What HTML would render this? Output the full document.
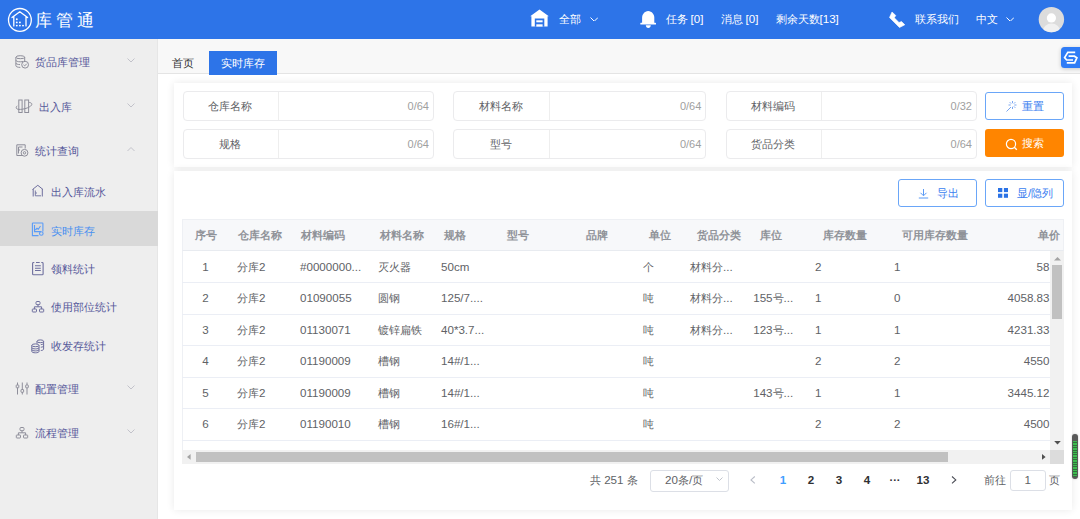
<!DOCTYPE html><html><head><meta charset="utf-8"><style>
*{box-sizing:border-box;margin:0;padding:0}
html,body{width:1080px;height:519px;overflow:hidden;background:#fff;font-family:"Liberation Sans",sans-serif;font-size:11px;color:#606266}
.a{position:absolute;white-space:nowrap}
.b{position:absolute}
</style></head><body>
<div class="b" style="left:0;top:0;width:1080px;height:39px;background:#2d74e8"></div>
<svg class="b" style="left:0;top:0" width="40" height="40" viewBox="0 0 40 40">
<circle cx="19.9" cy="19.9" r="11.4" fill="none" stroke="#fff" stroke-width="1.3"/>
<path d="M12 17.6 L19.8 11.8 L27.6 17.6 M13.8 16.6 V25.9 M26 16.6 V25.9" fill="none" stroke="#fff" stroke-width="1.3" stroke-linecap="round" stroke-linejoin="round"/>
<g fill="#fff"><circle cx="16.8" cy="19.2" r="0.95"/><circle cx="16.8" cy="22.4" r="0.95"/><circle cx="19.9" cy="22.4" r="0.95"/><circle cx="16.8" cy="25.6" r="0.95"/><circle cx="19.9" cy="25.6" r="0.95"/><circle cx="23" cy="25.6" r="0.95"/></g>
</svg>
<div class="a" style="left:35px;top:9px;font-size:17px;line-height:24px;letter-spacing:3.8px;color:#fff">库管通</div>
<svg class="b" style="left:0;top:0" width="1080" height="39" viewBox="0 0 1080 39">
<path d="M539.5 9.6 L548.8 16.2 L547.6 16.2 V26.6 H531.4 V16.2 L530.2 16.2 Z" fill="#fff"/>
<rect x="534.8" y="18.5" width="9.5" height="8.2" fill="#2d74e8"/>
<rect x="536.3" y="20.3" width="6.3" height="2" fill="#fff"/><rect x="536.3" y="24.3" width="6.3" height="2.3" fill="#fff"/>
<path d="M648.2 11 C644.5 11.4 642.1 14 642.1 18 V23 H654.3 V18 C654.3 14 651.9 11.4 648.2 11 Z" fill="#fff"/>
<rect x="640.3" y="22.8" width="15.7" height="1.8" rx="0.6" fill="#fff"/>
<path d="M645.8 25.3 H650.8 C650.8 26.9 649.7 28 648.3 28 C646.9 28 645.8 26.9 645.8 25.3 Z" fill="#fff"/>
<path d="M892 12 L895.8 15.5 L894.3 17.8 L899 22.5 L901.5 21.5 L904.8 24.8 L899.5 27.5 L889.5 17.5 Z" fill="#fff" stroke="#fff" stroke-width="0.6" stroke-linejoin="round"/>
<circle cx="1051.4" cy="19.6" r="12.7" fill="#dcdcdc"/>
<clipPath id="av"><circle cx="1051.4" cy="19.6" r="12.7"/></clipPath>
<ellipse cx="1051.5" cy="31" rx="8.6" ry="7.4" fill="#f0f0f0" clip-path="url(#av)"/>
<circle cx="1051.4" cy="17.9" r="4.6" fill="#fff"/>
</svg>
<div class="a" style="top:11.80px;line-height:14px;left:559px;color:#fff;">全部</div>
<svg class="b" style="left:589.5px;top:16.5px" width="8.5" height="4.75"><path d="M0.5 0.5 L4.25 4.25 L8.0 0.5" fill="none" stroke="#fff" stroke-width="1"/></svg>
<div class="a" style="top:11.80px;line-height:14px;left:665.5px;color:#fff;">任务 <span style="font-size:11.6px">[0]</span></div>
<div class="a" style="top:11.80px;line-height:14px;left:720.5px;color:#fff;">消息 <span style="font-size:11.6px">[0]</span></div>
<div class="a" style="top:11.80px;line-height:14px;left:775.5px;color:#fff;">剩余天数<span style="font-size:11.6px">[13]</span></div>
<div class="a" style="top:11.80px;line-height:14px;left:914.5px;color:#fff;">联系我们</div>
<div class="a" style="top:11.80px;line-height:14px;left:975.5px;color:#fff;">中文</div>
<svg class="b" style="left:1005.5px;top:16.5px" width="8.5" height="4.75"><path d="M0.5 0.5 L4.25 4.25 L8.0 0.5" fill="none" stroke="#fff" stroke-width="1"/></svg>
<div class="b" style="left:0;top:39px;width:158px;height:480px;background:#eeeeee"></div>
<div class="b" style="left:157px;top:39px;width:1px;height:480px;background:#e6e6e6"></div>
<div class="b" style="left:0;top:211px;width:158px;height:35px;background:#d9d9d9"></div>
<svg class="b" style="left:14px;top:54px" width="16" height="16" viewBox="0 0 16 16"><g fill="none" stroke="#8e8e9a" stroke-width="1"><ellipse cx="6.3" cy="3.2" rx="4.4" ry="1.5"/><path d="M1.9 3.2 V11.8 C1.9 12.7 3.8 13.4 6.3 13.4 M10.7 3.2 V7.5 M1.9 6.2 C1.9 7.1 3.8 7.8 6.3 7.8 C7.5 7.8 8.5 7.6 9.2 7.4 M1.9 9 C1.9 9.9 3.8 10.6 6 10.6"/><circle cx="11.1" cy="10.7" r="3.4" fill="#eeeeee"/><path d="M9.5 10.8 L10.7 11.9 L12.7 9.8"/></g></svg>
<div class="a" style="top:55.30px;line-height:14px;left:35.1px;color:#56589a;">货品库管理</div>
<svg class="b" style="left:126.5px;top:58.199999999999996px" width="8" height="4.5"><path d="M0.5 0.5 L4.0 4.0 L7.5 0.5" fill="none" stroke="#c2c2ca" stroke-width="1"/></svg>
<svg class="b" style="left:15px;top:99px" width="18" height="15" viewBox="0 0 18 15"><g fill="none" stroke="#8e8e9a" stroke-width="1"><rect x="3.8" y="1" width="3.3" height="12.5"/><rect x="9.8" y="1" width="3.8" height="12.5"/><path d="M2.2 6.8 C0.3 8.8 1 10.6 5.5 10.4 C10 10.2 16.5 7.8 16.8 5.4 C17 4.3 15.8 3.6 14.2 3.4"/></g></svg>
<div class="a" style="top:100.00px;line-height:14px;left:38.5px;color:#56589a;">出入库</div>
<svg class="b" style="left:126.5px;top:102.9px" width="8" height="4.5"><path d="M0.5 0.5 L4.0 4.0 L7.5 0.5" fill="none" stroke="#c2c2ca" stroke-width="1"/></svg>
<svg class="b" style="left:16px;top:144px" width="14" height="14" viewBox="0 0 14 14"><g fill="none" stroke="#8e8e9a" stroke-width="1"><path d="M6.5 11.5 H0.8 V0.8 H9.2 V4.5"/><path d="M2.5 3 H6.5 M2.5 3 V9.5 M2.5 6 H4" /><circle cx="8.5" cy="8.8" r="3.4" fill="#eeeeee"/><circle cx="8.5" cy="8.8" r="1.2"/></g></svg>
<div class="a" style="top:143.80px;line-height:14px;left:34.7px;color:#56589a;">统计查询</div>
<svg class="b" style="left:126.5px;top:146.70000000000002px" width="8" height="4.5"><path d="M0.5 4.0 L4.0 0.5 L7.5 4.0" fill="none" stroke="#c2c2ca" stroke-width="1"/></svg>
<svg class="b" style="left:31px;top:184px" width="14" height="14" viewBox="0 0 14 14"><g fill="none" stroke="#6e6f9e" stroke-width="1"><path d="M1.5 5.5 L6.8 1.3 L12 5.5 M2.2 5 V12.5 M11.3 5 V12.5"/><path d="M4.3 6.5 V11.8 H10 M4.3 9 H6" stroke-width="0.9"/></g></svg>
<div class="a" style="top:185.00px;line-height:14px;left:50.9px;color:#56589a;">出入库流水</div>
<svg class="b" style="left:31px;top:222px" width="14" height="15" viewBox="0 0 14 15"><g fill="none" stroke="#5a9cf8" stroke-width="1.1"><path d="M7.5 13.6 H1.4 V1.6 Q1.4 1 2 1 H11.3 Q11.9 1 11.9 1.6 V9.5"/><path d="M3.5 3 V9.6 H10"/><path d="M4.3 8 L6 6.3 L7.3 7.3 L9.5 4"/><circle cx="10.3" cy="11.5" r="1.8"/></g></svg>
<div class="a" style="top:223.60px;line-height:14px;left:50.9px;color:#4a90f0;">实时库存</div>
<svg class="b" style="left:31px;top:261px" width="14" height="15" viewBox="0 0 14 15"><g fill="none" stroke="#6e6f9e" stroke-width="1.1"><path d="M3.3 1.5 H2.5 Q1.6 1.5 1.6 2.4 V12.9 Q1.6 13.8 2.5 13.8 H11.2 Q12.1 13.8 12.1 12.9 V2.4 Q12.1 1.5 11.2 1.5 H10.3 M5 1.5 H8.7"/><path d="M4 4.8 H9.8 M4 7.3 H9.8 M4 9.5 H9.8"/></g></svg>
<div class="a" style="top:261.80px;line-height:14px;left:50.9px;color:#56589a;">领料统计</div>
<svg class="b" style="left:31px;top:300px" width="14" height="14" viewBox="0 0 14 14"><g fill="none" stroke="#6e6f9e" stroke-width="1"><rect x="5" y="1.5" width="4" height="3.2" rx="1"/><path d="M7 4.7 V6.8 M3.4 9 V6.8 H10.6 V9"/><rect x="1.3" y="9" width="4.2" height="3" rx="0.6"/><rect x="8.5" y="9" width="4.2" height="3" rx="0.6"/></g></svg>
<div class="a" style="top:300.40px;line-height:14px;left:50.9px;color:#56589a;">使用部位统计</div>
<svg class="b" style="left:30px;top:338px" width="16" height="16" viewBox="0 0 16 16"><g fill="none" stroke="#6e6f9e" stroke-width="1"><ellipse cx="10.3" cy="3.3" rx="3.3" ry="1.4"/><path d="M7 3.3 V5.6 M13.6 3.3 V11.2 C13.6 11.9 12.4 12.4 10.8 12.5 M10.8 6.6 C12.4 6.5 13.6 6 13.6 5.3 M10.8 9.2 C12.4 9.1 13.6 8.6 13.6 7.9"/><ellipse cx="5.4" cy="7.3" rx="3.6" ry="1.4" fill="#eeeeee"/><path d="M1.8 7.3 V13.5 C1.8 14.3 3.4 14.8 5.4 14.8 C7.4 14.8 9 14.3 9 13.5 V7.3 M1.8 9.6 C1.8 10.4 3.4 10.9 5.4 10.9 C7.4 10.9 9 10.4 9 9.6 M1.8 11.6 C1.8 12.4 3.4 12.9 5.4 12.9 C7.4 12.9 9 12.4 9 11.6"/></g></svg>
<div class="a" style="top:339.30px;line-height:14px;left:50.9px;color:#56589a;">收发存统计</div>
<svg class="b" style="left:15px;top:381px" width="15" height="15" viewBox="0 0 15 15"><g fill="none" stroke="#8e8e9a" stroke-width="1"><path d="M2.5 1.5 V4 M2.5 6.8 V13.5 M7.3 1.5 V8.5 M7.3 11.2 V13.5 M12 1.5 V4 M12 6.8 V13.5"/><rect x="1.2" y="4" width="2.6" height="2.8" rx="0.5"/><rect x="6" y="8.5" width="2.6" height="2.8" rx="0.5"/><rect x="10.7" y="4" width="2.6" height="2.8" rx="0.5"/></g></svg>
<div class="a" style="top:382.10px;line-height:14px;left:34.6px;color:#56589a;">配置管理</div>
<svg class="b" style="left:126.5px;top:385.0px" width="8" height="4.5"><path d="M0.5 0.5 L4.0 4.0 L7.5 0.5" fill="none" stroke="#c2c2ca" stroke-width="1"/></svg>
<svg class="b" style="left:15px;top:426px" width="14" height="14" viewBox="0 0 14 14"><g fill="none" stroke="#8e8e9a" stroke-width="1"><rect x="5" y="1.5" width="4" height="3.2" rx="1"/><path d="M7 4.7 V6.8 M3.4 9 V6.8 H10.6 V9"/><rect x="1.3" y="9" width="4.2" height="3" rx="0.6"/><rect x="8.5" y="9" width="4.2" height="3" rx="0.6"/></g></svg>
<div class="a" style="top:426.00px;line-height:14px;left:34.6px;color:#56589a;">流程管理</div>
<svg class="b" style="left:126.5px;top:428.9px" width="8" height="4.5"><path d="M0.5 0.5 L4.0 4.0 L7.5 0.5" fill="none" stroke="#c2c2ca" stroke-width="1"/></svg>
<div class="b" style="left:158px;top:39px;width:922px;height:35px;background:#f8f8f8;border-bottom:1px solid #e4e4e4"></div>
<div class="a" style="top:56.00px;line-height:14px;left:172.2px;color:#303133;">首页</div>
<div class="b" style="left:209px;top:51px;width:68px;height:23.5px;background:#2d74e8"></div>
<div class="a" style="top:56.00px;line-height:14px;left:220.8px;color:#fff;">实时库存</div>
<div class="b" style="left:1061px;top:47.2px;width:24px;height:20.5px;border-radius:3.5px;background:#2f7cf6;box-shadow:0 1px 4px rgba(0,0,0,0.2)"></div>
<svg class="b" style="left:1040px;top:40px" width="40" height="40" viewBox="1040 40 40 40"><g fill="none" stroke="#fff" stroke-width="1.7" stroke-linejoin="miter"><path d="M1075.2 52.3 H1067.8 L1064.6 57.6 L1066.7 60 H1073"/><path d="M1068.6 56.2 H1074.4 L1076.9 57.8 L1074.6 62.9 H1066.8"/></g></svg>
<div class="b" style="left:173.5px;top:82.5px;width:898.5px;height:84px;background:#fff;box-shadow:0 0 8px rgba(0,0,0,0.09)"></div>
<div class="b" style="left:182.5px;top:91px;width:251.5px;height:29.5px;border:1px solid #ebebed;border-radius:4px;background:#fff"></div>
<div class="b" style="left:277.6px;top:92px;width:1px;height:27.5px;background:#eeeeee"></div>
<div class="a" style="top:98.50px;line-height:14px;left:130.05px;width:200px;text-align:center;color:#606266;">仓库名称</div>
<div class="a" style="top:98.50px;line-height:14px;right:651px;color:#a0a0a0;">0/64</div>
<div class="b" style="left:182.5px;top:129.4px;width:251.5px;height:29.5px;border:1px solid #ebebed;border-radius:4px;background:#fff"></div>
<div class="b" style="left:277.6px;top:130.4px;width:1px;height:27.5px;background:#eeeeee"></div>
<div class="a" style="top:136.90px;line-height:14px;left:130.05px;width:200px;text-align:center;color:#606266;">规格</div>
<div class="a" style="top:136.90px;line-height:14px;right:651px;color:#a0a0a0;">0/64</div>
<div class="b" style="left:453px;top:91px;width:253.29999999999995px;height:29.5px;border:1px solid #ebebed;border-radius:4px;background:#fff"></div>
<div class="b" style="left:549px;top:92px;width:1px;height:27.5px;background:#eeeeee"></div>
<div class="a" style="top:98.50px;line-height:14px;left:401.0px;width:200px;text-align:center;color:#606266;">材料名称</div>
<div class="a" style="top:98.50px;line-height:14px;right:378.70000000000005px;color:#a0a0a0;">0/64</div>
<div class="b" style="left:453px;top:129.4px;width:253.29999999999995px;height:29.5px;border:1px solid #ebebed;border-radius:4px;background:#fff"></div>
<div class="b" style="left:549px;top:130.4px;width:1px;height:27.5px;background:#eeeeee"></div>
<div class="a" style="top:136.90px;line-height:14px;left:401.0px;width:200px;text-align:center;color:#606266;">型号</div>
<div class="a" style="top:136.90px;line-height:14px;right:378.70000000000005px;color:#a0a0a0;">0/64</div>
<div class="b" style="left:725.5px;top:91px;width:251.5px;height:29.5px;border:1px solid #ebebed;border-radius:4px;background:#fff"></div>
<div class="b" style="left:821px;top:92px;width:1px;height:27.5px;background:#eeeeee"></div>
<div class="a" style="top:98.50px;line-height:14px;left:673.25px;width:200px;text-align:center;color:#606266;">材料编码</div>
<div class="a" style="top:98.50px;line-height:14px;right:108px;color:#a0a0a0;">0/32</div>
<div class="b" style="left:725.5px;top:129.4px;width:251.5px;height:29.5px;border:1px solid #ebebed;border-radius:4px;background:#fff"></div>
<div class="b" style="left:821px;top:130.4px;width:1px;height:27.5px;background:#eeeeee"></div>
<div class="a" style="top:136.90px;line-height:14px;left:673.25px;width:200px;text-align:center;color:#606266;">货品分类</div>
<div class="a" style="top:136.90px;line-height:14px;right:108px;color:#a0a0a0;">0/64</div>
<div class="b" style="left:985.3px;top:91.5px;width:78.5px;height:28.2px;border:1px solid #6aa6f8;border-radius:3px;background:#fff"></div>
<div class="a" style="top:98.60px;line-height:14px;left:1021.9px;color:#3a7ef0;">重置</div>
<svg class="b" style="left:1005px;top:99.5px" width="13" height="13" viewBox="0 0 13 13"><g stroke="#7aa6f0" stroke-width="1" fill="none"><path d="M1.5 11.5 L6 7"/><path d="M7.5 1 V3.2 M7.5 6.8 V9 M3.5 5 H5.7 M9.3 5 H11.5 M4.7 2.2 L6.1 3.6 M8.9 6.4 L10.3 7.8 M10.3 2.2 L8.9 3.6"/></g></svg>
<div class="b" style="left:985.3px;top:129px;width:78.5px;height:28px;border-radius:3px;background:#ff8500"></div>
<svg class="b" style="left:1005px;top:137.5px" width="13" height="13" viewBox="0 0 13 13"><circle cx="6" cy="6" r="4.6" fill="none" stroke="#fff" stroke-width="1.2"/><path d="M9.3 9.3 L11.8 11.8" stroke="#fff" stroke-width="1.3"/></svg>
<div class="a" style="top:136.00px;line-height:14px;left:1021.9px;color:#fff;">搜索</div>
<div class="b" style="left:173.5px;top:170.5px;width:898.5px;height:339.5px;background:#fff;box-shadow:0 0 8px rgba(0,0,0,0.09)"></div>
<div class="b" style="left:898.2px;top:178.5px;width:78.6px;height:28px;border:1px solid #6aa6f8;border-radius:3px;background:#fff"></div>
<svg class="b" style="left:918px;top:188px" width="11" height="11" viewBox="0 0 11 11"><path d="M5.5 1 V7.5 M2.5 4.8 L5.5 7.8 L8.5 4.8 M0.8 10 H10.2" fill="none" stroke="#5b9af5" stroke-width="1"/></svg>
<div class="a" style="top:185.50px;line-height:14px;left:936.8px;color:#3a7ef0;">导出</div>
<div class="b" style="left:985.4px;top:178.5px;width:78.6px;height:28px;border:1px solid #6aa6f8;border-radius:3px;background:#fff"></div>
<svg class="b" style="left:997.9px;top:187.9px" width="10.2" height="9.8" viewBox="0 0 10.2 9.8"><g fill="#2a72e6"><rect x="0" y="0" width="4.3" height="4.1"/><rect x="5.9" y="0" width="4.3" height="4.1"/><rect x="0" y="5.7" width="4.3" height="4.1"/><rect x="5.9" y="5.7" width="4.3" height="4.1"/></g></svg>
<div class="a" style="top:185.50px;line-height:14px;left:1016.9px;color:#3a7ef0;">显<span style="font-size:11.6px">/</span>隐列</div>
<div class="b" style="left:182px;top:219px;width:881.5px;height:32px;background:#f7f8fa;border:1px solid #eef0f4;border-bottom:1px solid #e8ebf0"></div>
<div class="a" style="top:228.30px;line-height:14px;left:106px;width:200px;text-align:center;color:#909399;font-weight:bold;">序号</div>
<div class="a" style="top:228.30px;line-height:14px;left:238px;color:#909399;font-weight:bold;">仓库名称</div>
<div class="a" style="top:228.30px;line-height:14px;left:301px;color:#909399;font-weight:bold;">材料编码</div>
<div class="a" style="top:228.30px;line-height:14px;left:380px;color:#909399;font-weight:bold;">材料名称</div>
<div class="a" style="top:228.30px;line-height:14px;left:443.5px;color:#909399;font-weight:bold;">规格</div>
<div class="a" style="top:228.30px;line-height:14px;left:507px;color:#909399;font-weight:bold;">型号</div>
<div class="a" style="top:228.30px;line-height:14px;left:586px;color:#909399;font-weight:bold;">品牌</div>
<div class="a" style="top:228.30px;line-height:14px;left:649px;color:#909399;font-weight:bold;">单位</div>
<div class="a" style="top:228.30px;line-height:14px;left:697px;color:#909399;font-weight:bold;">货品分类</div>
<div class="a" style="top:228.30px;line-height:14px;left:760px;color:#909399;font-weight:bold;">库位</div>
<div class="a" style="top:228.30px;line-height:14px;left:823px;color:#909399;font-weight:bold;">库存数量</div>
<div class="a" style="top:228.30px;line-height:14px;left:902.4px;color:#909399;font-weight:bold;">可用库存数量</div>
<div class="a" style="top:228.30px;line-height:14px;right:20px;color:#909399;font-weight:bold;">单价</div>
<div class="b" style="left:182px;top:251px;width:1px;height:200px;background:#eef0f4"></div>
<div class="a" style="top:259.75px;line-height:14px;left:105.6px;width:200px;text-align:center;color:#606266;"><span style="font-size:11.6px">1</span></div>
<div class="a" style="top:259.75px;line-height:14px;left:237px;color:#606266;">分库<span style="font-size:11.6px">2</span></div>
<div class="a" style="top:259.75px;line-height:14px;left:300px;color:#606266;"><span style="font-size:11.6px">#0000000...</span></div>
<div class="a" style="top:259.75px;line-height:14px;left:377.6px;color:#606266;">灭火器</div>
<div class="a" style="top:259.75px;line-height:14px;left:441px;color:#606266;"><span style="font-size:11.6px">50cm</span></div>
<div class="a" style="top:259.75px;line-height:14px;left:643.3px;color:#606266;">个</div>
<div class="a" style="top:259.75px;line-height:14px;left:690px;color:#606266;">材料分<span style="font-size:11.6px">...</span></div>
<div class="a" style="top:259.75px;line-height:14px;left:815px;color:#606266;"><span style="font-size:11.6px">2</span></div>
<div class="a" style="top:259.75px;line-height:14px;left:894px;color:#606266;"><span style="font-size:11.6px">1</span></div>
<div class="a" style="top:259.75px;line-height:14px;right:30.5px;color:#606266;"><span style="font-size:11.6px">58</span></div>
<div class="b" style="left:182px;top:282.2px;width:868px;height:1px;background:#ebeef5"></div>
<div class="a" style="top:291.25px;line-height:14px;left:105.6px;width:200px;text-align:center;color:#606266;"><span style="font-size:11.6px">2</span></div>
<div class="a" style="top:291.25px;line-height:14px;left:237px;color:#606266;">分库<span style="font-size:11.6px">2</span></div>
<div class="a" style="top:291.25px;line-height:14px;left:300px;color:#606266;"><span style="font-size:11.6px">01090055</span></div>
<div class="a" style="top:291.25px;line-height:14px;left:377.6px;color:#606266;">圆钢</div>
<div class="a" style="top:291.25px;line-height:14px;left:441px;color:#606266;"><span style="font-size:11.6px">125/7....</span></div>
<div class="a" style="top:291.25px;line-height:14px;left:643.3px;color:#606266;">吨</div>
<div class="a" style="top:291.25px;line-height:14px;left:690px;color:#606266;">材料分<span style="font-size:11.6px">...</span></div>
<div class="a" style="top:291.25px;line-height:14px;left:753.2px;color:#606266;"><span style="font-size:11.6px">155</span>号<span style="font-size:11.6px">...</span></div>
<div class="a" style="top:291.25px;line-height:14px;left:815px;color:#606266;"><span style="font-size:11.6px">1</span></div>
<div class="a" style="top:291.25px;line-height:14px;left:894px;color:#606266;"><span style="font-size:11.6px">0</span></div>
<div class="a" style="top:291.25px;line-height:14px;right:30.5px;color:#606266;"><span style="font-size:11.6px">4058.83</span></div>
<div class="b" style="left:182px;top:313.7px;width:868px;height:1px;background:#ebeef5"></div>
<div class="a" style="top:322.75px;line-height:14px;left:105.6px;width:200px;text-align:center;color:#606266;"><span style="font-size:11.6px">3</span></div>
<div class="a" style="top:322.75px;line-height:14px;left:237px;color:#606266;">分库<span style="font-size:11.6px">2</span></div>
<div class="a" style="top:322.75px;line-height:14px;left:300px;color:#606266;"><span style="font-size:11.6px">01130071</span></div>
<div class="a" style="top:322.75px;line-height:14px;left:377.6px;color:#606266;">镀锌扁铁</div>
<div class="a" style="top:322.75px;line-height:14px;left:441px;color:#606266;"><span style="font-size:11.6px">40*3.7...</span></div>
<div class="a" style="top:322.75px;line-height:14px;left:643.3px;color:#606266;">吨</div>
<div class="a" style="top:322.75px;line-height:14px;left:690px;color:#606266;">材料分<span style="font-size:11.6px">...</span></div>
<div class="a" style="top:322.75px;line-height:14px;left:753.2px;color:#606266;"><span style="font-size:11.6px">123</span>号<span style="font-size:11.6px">...</span></div>
<div class="a" style="top:322.75px;line-height:14px;left:815px;color:#606266;"><span style="font-size:11.6px">1</span></div>
<div class="a" style="top:322.75px;line-height:14px;left:894px;color:#606266;"><span style="font-size:11.6px">1</span></div>
<div class="a" style="top:322.75px;line-height:14px;right:30.5px;color:#606266;"><span style="font-size:11.6px">4231.33</span></div>
<div class="b" style="left:182px;top:345.2px;width:868px;height:1px;background:#ebeef5"></div>
<div class="a" style="top:354.25px;line-height:14px;left:105.6px;width:200px;text-align:center;color:#606266;"><span style="font-size:11.6px">4</span></div>
<div class="a" style="top:354.25px;line-height:14px;left:237px;color:#606266;">分库<span style="font-size:11.6px">2</span></div>
<div class="a" style="top:354.25px;line-height:14px;left:300px;color:#606266;"><span style="font-size:11.6px">01190009</span></div>
<div class="a" style="top:354.25px;line-height:14px;left:377.6px;color:#606266;">槽钢</div>
<div class="a" style="top:354.25px;line-height:14px;left:441px;color:#606266;"><span style="font-size:11.6px">14#/1...</span></div>
<div class="a" style="top:354.25px;line-height:14px;left:643.3px;color:#606266;">吨</div>
<div class="a" style="top:354.25px;line-height:14px;left:815px;color:#606266;"><span style="font-size:11.6px">2</span></div>
<div class="a" style="top:354.25px;line-height:14px;left:894px;color:#606266;"><span style="font-size:11.6px">2</span></div>
<div class="a" style="top:354.25px;line-height:14px;right:30.5px;color:#606266;"><span style="font-size:11.6px">4550</span></div>
<div class="b" style="left:182px;top:376.7px;width:868px;height:1px;background:#ebeef5"></div>
<div class="a" style="top:385.75px;line-height:14px;left:105.6px;width:200px;text-align:center;color:#606266;"><span style="font-size:11.6px">5</span></div>
<div class="a" style="top:385.75px;line-height:14px;left:237px;color:#606266;">分库<span style="font-size:11.6px">2</span></div>
<div class="a" style="top:385.75px;line-height:14px;left:300px;color:#606266;"><span style="font-size:11.6px">01190009</span></div>
<div class="a" style="top:385.75px;line-height:14px;left:377.6px;color:#606266;">槽钢</div>
<div class="a" style="top:385.75px;line-height:14px;left:441px;color:#606266;"><span style="font-size:11.6px">14#/1...</span></div>
<div class="a" style="top:385.75px;line-height:14px;left:643.3px;color:#606266;">吨</div>
<div class="a" style="top:385.75px;line-height:14px;left:753.2px;color:#606266;"><span style="font-size:11.6px">143</span>号<span style="font-size:11.6px">...</span></div>
<div class="a" style="top:385.75px;line-height:14px;left:815px;color:#606266;"><span style="font-size:11.6px">1</span></div>
<div class="a" style="top:385.75px;line-height:14px;left:894px;color:#606266;"><span style="font-size:11.6px">1</span></div>
<div class="a" style="top:385.75px;line-height:14px;right:30.5px;color:#606266;"><span style="font-size:11.6px">3445.12</span></div>
<div class="b" style="left:182px;top:408.2px;width:868px;height:1px;background:#ebeef5"></div>
<div class="a" style="top:417.25px;line-height:14px;left:105.6px;width:200px;text-align:center;color:#606266;"><span style="font-size:11.6px">6</span></div>
<div class="a" style="top:417.25px;line-height:14px;left:237px;color:#606266;">分库<span style="font-size:11.6px">2</span></div>
<div class="a" style="top:417.25px;line-height:14px;left:300px;color:#606266;"><span style="font-size:11.6px">01190010</span></div>
<div class="a" style="top:417.25px;line-height:14px;left:377.6px;color:#606266;">槽钢</div>
<div class="a" style="top:417.25px;line-height:14px;left:441px;color:#606266;"><span style="font-size:11.6px">16#/1...</span></div>
<div class="a" style="top:417.25px;line-height:14px;left:643.3px;color:#606266;">吨</div>
<div class="a" style="top:417.25px;line-height:14px;left:815px;color:#606266;"><span style="font-size:11.6px">2</span></div>
<div class="a" style="top:417.25px;line-height:14px;left:894px;color:#606266;"><span style="font-size:11.6px">2</span></div>
<div class="a" style="top:417.25px;line-height:14px;right:30.5px;color:#606266;"><span style="font-size:11.6px">4500</span></div>
<div class="b" style="left:182px;top:439.7px;width:868px;height:1px;background:#ebeef5"></div>
<div class="b" style="left:1050px;top:251px;width:13.5px;height:199px;background:#f1f1f1"></div>
<div class="b" style="left:1052px;top:264.7px;width:10px;height:54px;background:#c1c1c1"></div>
<svg class="b" style="left:1053.5px;top:256.5px" width="7" height="4"><path d="M0 3.6 L3.5 0 L7 3.6 Z" fill="#a3a3a3"/></svg>
<svg class="b" style="left:1053.5px;top:441px" width="7" height="4"><path d="M0.2 0 L3.5 3.4 L6.8 0 Z" fill="#505050"/></svg>
<div class="b" style="left:182px;top:450px;width:868px;height:13.5px;background:#f1f1f1"></div>
<div class="b" style="left:195.8px;top:452.2px;width:752px;height:9.4px;background:#c1c1c1"></div>
<div class="b" style="left:1050px;top:450px;width:13.5px;height:13.5px;background:#dcdcdc"></div>
<svg class="b" style="left:187.3px;top:454px" width="4" height="6"><path d="M3.6 0 L0 2.9 L3.6 5.8 Z" fill="#a3a3a3"/></svg>
<svg class="b" style="left:1042px;top:454px" width="4" height="6"><path d="M0 0 L3.6 2.9 L0 5.8 Z" fill="#505050"/></svg>
<div class="a" style="top:473.30px;line-height:14px;left:589.6px;color:#606266;word-spacing:0.5px;">共 <span style="font-size:11.6px">251</span> 条</div>
<div class="b" style="left:650.3px;top:470.3px;width:78.5px;height:21.5px;border:1px solid #dcdfe6;border-radius:3px"></div>
<div class="a" style="top:473.30px;line-height:14px;left:665px;color:#606266;"><span style="font-size:11.6px">20</span>条<span style="font-size:11.6px">/</span>页</div>
<svg class="b" style="left:715.5px;top:476.5px" width="7" height="4.0"><path d="M0.5 0.5 L3.5 3.5 L6.5 0.5" fill="none" stroke="#c0c4cc" stroke-width="1"/></svg>
<svg class="b" style="left:749.5px;top:475.8px" width="6" height="8"><path d="M4.8 0.5 L1 3.9 L4.8 7.3" fill="none" stroke="#b8bcc6" stroke-width="1.1"/></svg>
<div class="a" style="top:473.30px;line-height:14px;left:683px;width:200px;text-align:center;color:#409eff;font-weight:bold;"><span style="font-size:11.6px">1</span></div>
<div class="a" style="top:473.30px;line-height:14px;left:711px;width:200px;text-align:center;color:#303133;font-weight:bold;"><span style="font-size:11.6px">2</span></div>
<div class="a" style="top:473.30px;line-height:14px;left:739px;width:200px;text-align:center;color:#303133;font-weight:bold;"><span style="font-size:11.6px">3</span></div>
<div class="a" style="top:473.30px;line-height:14px;left:767px;width:200px;text-align:center;color:#303133;font-weight:bold;"><span style="font-size:11.6px">4</span></div>
<div class="a" style="top:473.30px;line-height:14px;left:795px;width:200px;text-align:center;color:#303133;font-weight:bold;">···</div>
<div class="a" style="top:473.30px;line-height:14px;left:823px;width:200px;text-align:center;color:#303133;font-weight:bold;"><span style="font-size:11.6px">13</span></div>
<svg class="b" style="left:951.2px;top:475.8px" width="6" height="8"><path d="M1 0.5 L4.8 3.9 L1 7.3" fill="none" stroke="#4a4c55" stroke-width="1.1"/></svg>
<div class="a" style="top:473.30px;line-height:14px;left:984.3px;color:#606266;">前往</div>
<div class="b" style="left:1010px;top:469.5px;width:35.5px;height:21.5px;border:1px solid #dcdfe6;border-radius:3px"></div>
<div class="a" style="top:473.30px;line-height:14px;left:927.7px;width:200px;text-align:center;color:#606266;"><span style="font-size:11.6px">1</span></div>
<div class="a" style="top:473.30px;line-height:14px;left:1049px;color:#606266;">页</div>
<div class="b" style="left:1072px;top:434px;width:6px;height:45px;border-radius:3px;background:#595959;box-shadow:0 0 2px rgba(0,0,0,0.25)"></div>
<div class="b" style="left:1073px;top:440.5px;width:4px;height:36.5px;background:repeating-linear-gradient(to bottom,#3dbb4f 0,#3dbb4f 1.4px,#2f6f3a 1.4px,#2f6f3a 2.4px);border-radius:0 0 2px 2px"></div>
</body></html>
